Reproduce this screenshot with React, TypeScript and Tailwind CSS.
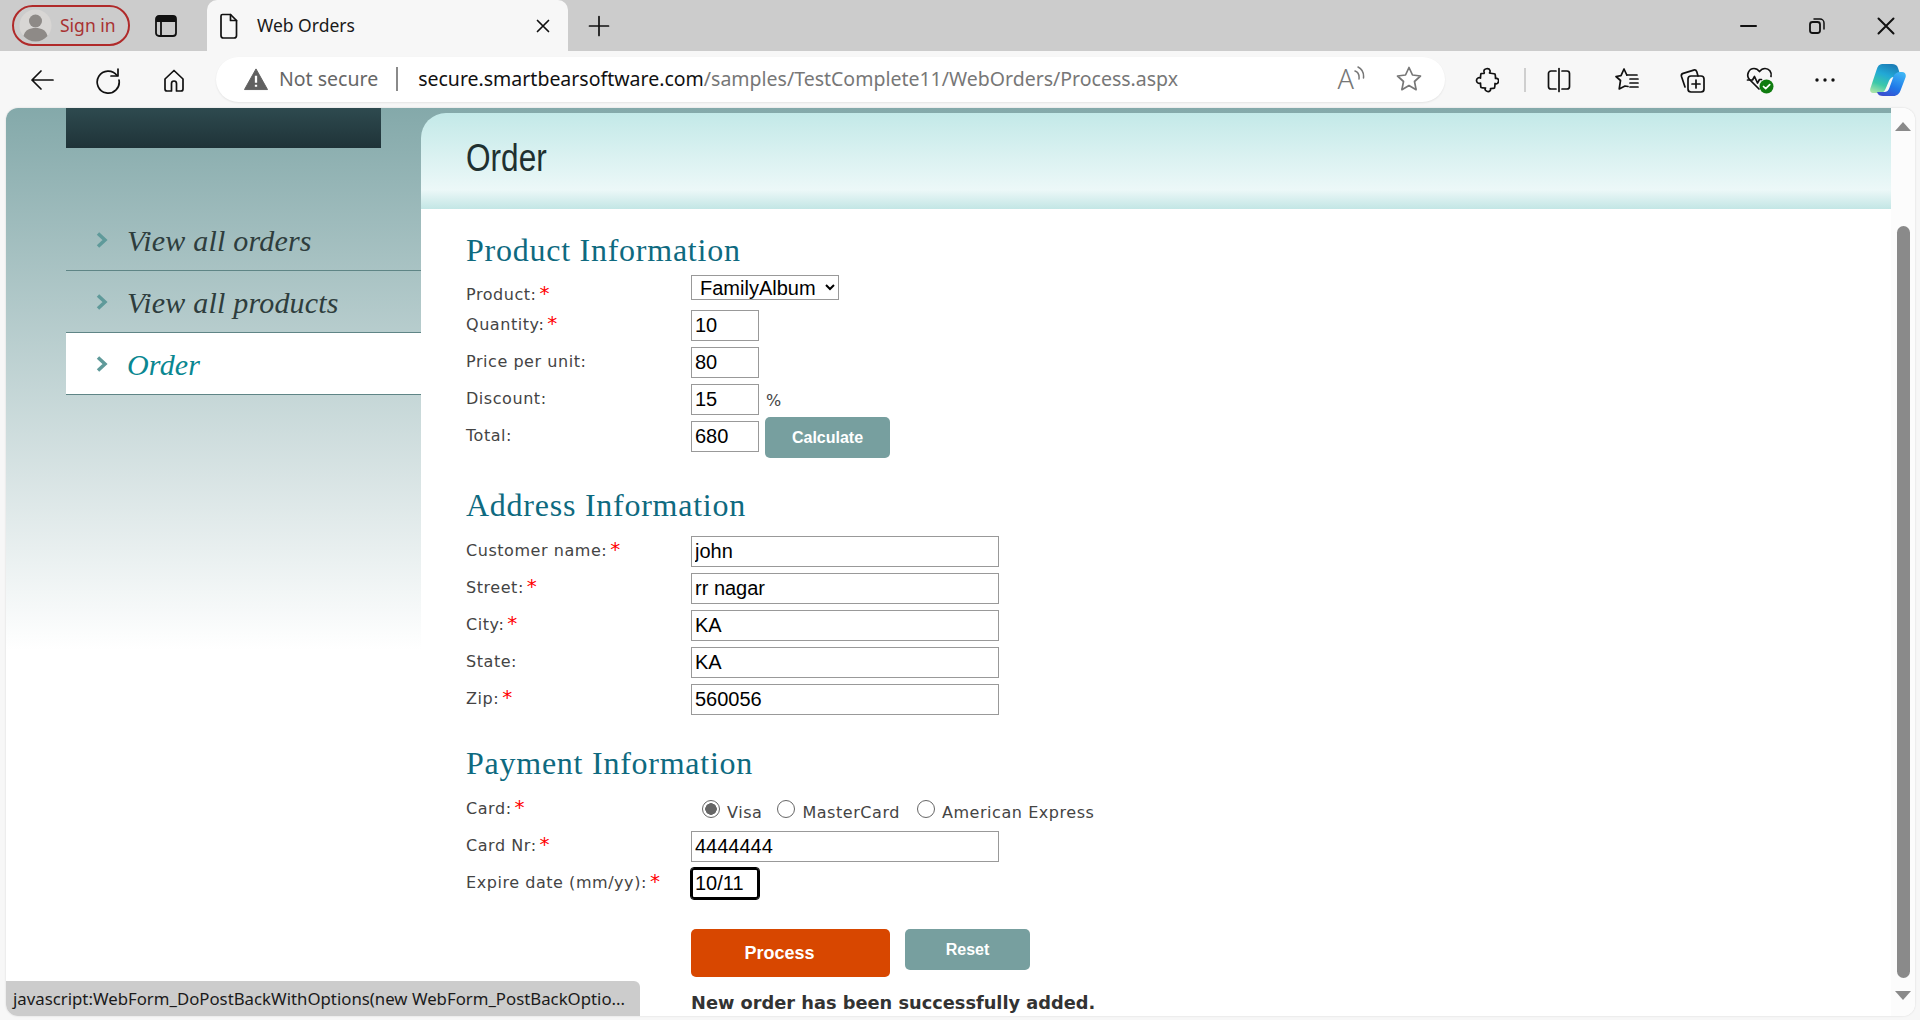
import React from "react";

const sans = "font-['Noto_Sans','Liberation_Sans',sans-serif]";
const stroke = { fill: "none", stroke: "currentColor", strokeWidth: 1.7, strokeLinecap: "round" as const, strokeLinejoin: "round" as const };

function Ico({ children, w = 28, h = 28, vb = "0 0 28 28", cls = "text-[#111]" }: { children: React.ReactNode; w?: number; h?: number; vb?: string; cls?: string }) {
  return <svg width={w} height={h} viewBox={vb} className={cls} {...stroke}>{children}</svg>;
}

function Slot({ w, children }: { w: string; children: React.ReactNode }) {
  return <div className={`${w} shrink-0 flex items-center justify-center`}>{children}</div>;
}

function TitleBar() {
  return (
    <div className="h-[51px] shrink-0 bg-[#cccccc] flex items-center">
      <div className="ml-[12px] mt-[-1px] w-[118px] h-[41px] shrink-0 rounded-full border-2 border-[#b02a2a] flex items-center pl-[5px]">
        <svg width="33" height="33" viewBox="0 0 33 33" className="shrink-0">
          <circle cx="16.5" cy="16.5" r="16" fill="#d8d6d4" />
          <circle cx="16.5" cy="12" r="6.5" fill="#8e8a87" />
          <path d="M4.5 27c1.5-6 6-8 12-8s10.500 2 12 8c-3 3.500-7 5.500-12 5.500s-9-2-12-5.500z" fill="#8e8a87" />
        </svg>
        <span className={`${sans} ml-[8px] text-[17.500px] text-[#a83232]`}>Sign in</span>
      </div>
      <div className="ml-[24px] shrink-0 w-[24px] h-[24px] flex items-center justify-center">
        <svg width="22" height="22" viewBox="0 0 22 22">
          <rect x="1" y="1" width="20" height="20" rx="3" fill="none" stroke="#111" strokeWidth="1.8" />
          <path d="M1 4a3 3 0 0 1 3-3h14a3 3 0 0 1 3 3v3H1z" fill="#111" />
          <path d="M6 7v14" stroke="#111" strokeWidth="1.8" />
        </svg>
      </div>
      <div className="ml-[29px] w-[361px] h-[51px] mt-0 shrink-0 bg-[#f7f7f7] rounded-t-[10px] flex items-center">
        <div className="ml-[12px] w-[20px] flex justify-center">
          <Ico w={20} h={26} vb="0 0 20 26"><path d="M3.500 1.500h8l6 6v15a2.500 2.500 0 0 1-2.500 2.500H4.500a2.500 2.500 0 0 1-2.500-2.500V3a1.500 1.500 0 0 1 1.500-1.500z" /><path d="M11.500 1.500v6h6" /></Ico>
        </div>
        <span className={`${sans} ml-[18px] text-[17.500px] text-[#1a1a1a]`}>Web Orders</span>
        <div className="ml-auto mr-[13px]">
          <Ico w={24} h={24} vb="0 0 24 24"><path d="M6.500 6.500l11 11M17.500 6.500l-11 11" /></Ico>
        </div>
      </div>
      <div className="ml-[19px]">
        <Ico w={24} h={24} vb="0 0 24 24"><path d="M12 2.500v19M2.500 12h19" /></Ico>
      </div>
      <div className="ml-auto flex">
        <Slot w="w-[69px]"><Ico w={20} h={20} vb="0 0 20 20"><path d="M3 10h15" strokeWidth="2" /></Ico></Slot>
        <Slot w="w-[69px]"><Ico w={20} h={20} vb="0 0 20 20"><rect x="3" y="6" width="10" height="11" rx="2.500" strokeWidth="1.800" /><path d="M7 3h6a4 4 0 0 1 4 4v6" strokeWidth="1.500" /></Ico></Slot>
        <Slot w="w-[69px]"><Ico w={22} h={22} vb="0 0 22 22"><path d="M3.500 3.500l15 15M18.500 3.500l-15 15" strokeWidth="2" /></Ico></Slot>
      </div>
    </div>
  );
}

function Toolbar() {
  return (
    <div className="h-[57px] shrink-0 bg-[#f7f7f7] flex items-center">
      <div className="ml-[9px] flex">
        <Slot w="w-[66px]"><Ico><path d="M25 14H4M13 5l-9 9 9 9" /></Ico></Slot>
        <Slot w="w-[66px]"><Ico><path d="M23 9.500A11 11 0 1 0 25 14" /><path d="M24 3v7h-7" /></Ico></Slot>
        <Slot w="w-[66px]"><Ico><path d="M5 13l9-8.500L23 13v10a2 2 0 0 1-2 2h-4.500v-7.500a2.500 2.500 0 0 0-5 0V25H7a2 2 0 0 1-2-2z" /></Ico></Slot>
      </div>
      <div className="ml-[9px] w-[1229px] h-[45px] mt-[-1px] shrink-0 rounded-full bg-white shadow-[0_1px_2px_rgba(0,0,0,0.08)] flex items-center">
        <div className="ml-[28px] w-[24px] flex justify-center">
          <svg width="25" height="24" viewBox="0 0 25 24">
            <path d="M12.500 1.500L24.500 23H.5z" fill="#606060" stroke="#606060" strokeLinejoin="round" />
            <path d="M12.500 8.500v7.500M12.500 18v2" stroke="#fff" strokeWidth="2.400" />
          </svg>
        </div>
        <span className={`${sans} ml-[11px] text-[19.500px] text-[#666]`}>Not secure</span>
        <div className="ml-[18px] w-[2px] h-[24px] bg-[#8a8a8a]" />
        <span className={`${sans} ml-[20px] text-[19.500px] text-[#777] whitespace-nowrap`}>
          <span className="text-[#111]">secure.smartbearsoftware.com</span>/samples/TestComplete11/WebOrders/Process.aspx
        </span>
        <div className="ml-auto flex items-center">
          <span className={`${sans} font-light text-[27px] leading-[32px] text-[#777]`}>A</span>
          <svg width="12" height="16" viewBox="0 0 12 16" className="text-[#777] mb-[12px] ml-[-1px]">
            <path d="M2 6c3 1 4.500 3.500 4 8M5 2c4 2 6 6 5.500 11" fill="none" stroke="currentColor" strokeWidth="1.500" strokeLinecap="round" />
          </svg>
          <div className="ml-[30px] mr-[22px]">
            <Ico cls="text-[#777]"><path d="M14 2.500l3.500 7.500 8 1-6 5.500 1.600 8.200L14 20.500l-7.100 4.200 1.600-8.200-6-5.500 8-1z" /></Ico>
          </div>
        </div>
      </div>
      <div className="ml-[9px] flex items-center">
        <Slot w="w-[66px]">
          <Ico w={24} h={26} vb="0 0 24 26">
            <path d="M9 4.500C8.500 1.500 14 .5 15 3.500c.3 1-.2 2-.5 2.500 1.500.5 4 .5 5.500 1 .5 1.500.5 3 .5 4.500 2.500-.5 3.500 1 3 3s-2 3-3.500 2c0 1.500 0 3-.5 4.500-1 .5-2.500 .5-4 .5.500 2-1 3.500-3 3s-3-2-2-3.500c-1.500 0-3 0-4.500-.5-.5-1.500-.5-3-.5-4.500-2 1-4-.5-4-2.500s2-3.500 4-2.500c0-1.500 0-3 .5-4.500C6 6.500 7.500 6.500 9 6.500c.5-.5.200-1.200 0-2z" />
          </Ico>
        </Slot>
        <div className="ml-[4px] w-[2px] h-[24px] bg-[#cfcfcf] shrink-0" />
        <Slot w="w-[66px]"><Ico><path d="M11 5H6a2.500 2.500 0 0 0-2.500 2.500v13A2.500 2.500 0 0 0 6 23h5M17 5h5a2.500 2.500 0 0 1 2.500 2.500v13A2.500 2.500 0 0 1 22 23h-5" /><path d="M14 2.500v23" /></Ico></Slot>
        <Slot w="w-[67px]"><Ico><path d="M14.800 9l-2.800-6-3 6.700-5 .8 4.500 4-1.300 8.500 5.800-3 3 .5" /><path d="M18 13h8M18 17h8M18 21h8M15 9h10" /></Ico></Slot>
        <Slot w="w-[66px]"><Ico><rect x="10" y="10" width="16" height="16" rx="3" /><path d="M18 14v8M14 18h8" /><path d="M7 21l-3.500-10.500a2.500 2.500 0 0 1 1.700-3.100l10.500-3.300a2.500 2.500 0 0 1 3 1.500L20 10" /></Ico></Slot>
        <Slot w="w-[69px]">
          <svg width="30" height="30" viewBox="0 0 30 30" className="text-[#111]">
            <path d="M14 24L4.500 14.500C.5 10 4 3.500 9 3.500c2.500 0 4 1 5.500 3 1.500-2 3-3 5.500-3 4 0 7 3.500 6 8" {...stroke} />
            <path d="M2.500 15h5l2-3.500 3 6.500 2-3.500h2" {...stroke} />
            <circle cx="21.500" cy="21.500" r="7" fill="#107c10" />
            <path d="M18.500 21.500l2.200 2.200 4-4" fill="none" stroke="#fff" strokeWidth="1.700" strokeLinecap="round" strokeLinejoin="round" />
          </svg>
        </Slot>
        <Slot w="w-[61px]">
          <svg width="22" height="6" viewBox="0 0 22 6" className="text-[#111]"><circle cx="3" cy="3" r="1.700" fill="currentColor" /><circle cx="11" cy="3" r="1.700" fill="currentColor" /><circle cx="19" cy="3" r="1.700" fill="currentColor" /></svg>
        </Slot>
        <Slot w="w-[66px]">
          <svg width="36" height="32" viewBox="0 0 36 32">
            <defs>
              <linearGradient id="cpa" x1="0.6" y1="0" x2="0.2" y2="1"><stop offset="0" stopColor="#1c7fb8" /><stop offset="0.35" stopColor="#22a9d6" /><stop offset="0.7" stopColor="#3cc8a8" /><stop offset="1" stopColor="#a6e3a8" /></linearGradient>
              <linearGradient id="cpb" x1="0.8" y1="0" x2="0.3" y2="1"><stop offset="0" stopColor="#3fb6f5" /><stop offset="0.6" stopColor="#1f78e8" /><stop offset="1" stopColor="#3a4fd0" /></linearGradient>
            </defs>
            <path d="M12 0h10c3 0 5 1 6 4l3 9h-7c-3 0-4.500 2-5.500 5l-3 7c-1 2.500-3 4-6 4H3c-2.500 0-3.500-2-2.500-5l6-18C7.500 2 9.500 0 12 0z" fill="url(#cpa)" />
            <path d="M31 8h1c3 0 4.500 2.500 3.500 5.500l-5 13c-1 3-3.500 5.500-7 5.500H13c-3 0-5-1-6-4h7c3 0 4.500-1.500 5.500-4.500l4-11c1-3 3.500-4.500 6.500-4.500z" fill="url(#cpb)" />
          </svg>
        </Slot>
      </div>
    </div>
  );
}

function Chevron() {
  return (
    <svg width="12" height="16" viewBox="0 0 12 16" className="shrink-0">
      <path d="M2 1.500l7 6.500-7 6.500" fill="none" stroke="#5f9a9a" strokeWidth="3.500" />
    </svg>
  );
}

function NavRow({ label, active }: { label: string; active?: boolean }) {
  return (
    <div className={`h-[62px] flex items-center pl-[30px] border-b border-b-[#5f8586] ${active ? "bg-white" : ""}`}>
      <Chevron />
      <span className={`ml-[19px] mt-[1px] font-['Liberation_Serif',serif] italic text-[30px] tracking-[0.2px] ${active ? "text-[#0a8791]" : "text-[#2e3d3d]"}`}>{label}</span>
    </div>
  );
}

function Label({ text, req }: { text: string; req?: boolean }) {
  return (
    <span className="w-[225px] shrink-0 h-[31px] leading-[29px] font-['DejaVu_Sans',sans-serif] text-[16px] tracking-[0.55px] text-[#444] whitespace-nowrap">
      {text}{req && <span className="text-[#ff0000] text-[20px] leading-[0] ml-[3px]">*</span>}
    </span>
  );
}

const inputCls = "h-[31px] border border-[#999] px-[3px] font-['Liberation_Sans',sans-serif] text-[20px] text-black bg-white";

function Field({ label, req, value, wide }: { label: string; req?: boolean; value: string; wide?: boolean }) {
  return (
    <div className="h-[37px] flex items-start">
      <Label text={label} req={req} />
      <input readOnly defaultValue={value} className={`${inputCls} ${wide ? "w-[308px]" : "w-[68px]"}`} />
    </div>
  );
}

function Heading({ children, cls }: { children: React.ReactNode; cls: string }) {
  return <h2 className={`${cls} h-[40px] leading-[40px] font-['Liberation_Serif',serif] text-[32px] tracking-[0.75px] text-[#0e6a80]`}>{children}</h2>;
}

function Radio({ label, checked, cls }: { label: string; checked?: boolean; cls: string }) {
  return (
    <label className={`${cls} flex items-center font-['DejaVu_Sans',sans-serif] text-[16px] tracking-[0.55px] text-[#444] whitespace-nowrap`}>
      <input
        type="radio"
        readOnly
        checked={!!checked}
        className="appearance-none w-[18px] h-[18px] mt-[-6px] rounded-full border border-[#666] bg-white checked:bg-[radial-gradient(circle,#666_0,#666_5.500px,#fff_6px)]"
      />
      <span className="ml-[7px] mt-[2px]">{label}</span>
    </label>
  );
}

function Main() {
  return (
    <div className="flex-1 min-w-0 flex flex-col">
      <div className="mt-[5px] h-[96px] shrink-0 rounded-tl-[25px] bg-[linear-gradient(#c3e9e8_0%,#ecf8f8_80%,#c3e6e5_100%)] flex items-center pl-[45px]">
        <h1 className="mt-[-5px] origin-left scale-x-[0.81] font-['Liberation_Sans',sans-serif] text-[39px] text-[#1f3030]">Order</h1>
      </div>
      <div className="flex-1 bg-white pl-[45px] pt-[21px]">
        <Heading cls="">Product Information</Heading>
        <div className="mt-[5px] h-[35px] flex items-start">
          <div className="w-[225px] shrink-0 pt-[5px] flex"><Label text="Product:" req /></div>
          <select className="h-[25px] w-[148px] border border-[#999] bg-white pl-[4px] font-['Liberation_Sans',sans-serif] text-[20px] leading-[23px] text-black" defaultValue="FamilyAlbum">
            <option>FamilyAlbum</option>
          </select>
        </div>
        <Field label="Quantity:" req value="10" />
        <Field label="Price per unit:" value="80" />
        <div className="h-[37px] flex items-start">
          <Label text="Discount:" />
          <input readOnly defaultValue="15" className={`${inputCls} w-[68px]`} />
          <span className="ml-[7px] leading-[33px] font-['DejaVu_Sans',sans-serif] text-[16px] text-[#444]">%</span>
        </div>
        <div className="h-[37px] flex items-start">
          <Label text="Total:" />
          <input readOnly defaultValue="680" className={`${inputCls} w-[68px]`} />
          <button className="ml-[6px] mt-[-4px] w-[125px] h-[41px] rounded-[5px] bg-[#779f9f] text-white font-['Liberation_Sans',sans-serif] font-bold text-[16px]">Calculate</button>
        </div>

        <Heading cls="mt-[27px]">Address Information</Heading>
        <div className="mt-[11px]">
          <Field label="Customer name:" req value="john" wide />
          <Field label="Street:" req value="rr nagar" wide />
          <Field label="City:" req value="KA" wide />
          <Field label="State:" value="KA" wide />
          <Field label="Zip:" req value="560056" wide />
        </div>

        <Heading cls="mt-[22px]">Payment Information</Heading>
        <div className="mt-[11px] h-[37px] flex items-start">
          <Label text="Card:" req />
          <div className="flex items-center h-[37px] mt-[-1px]">
            <Radio label="Visa" checked cls="ml-[11px]" />
            <Radio label="MasterCard" cls="ml-[15px]" />
            <Radio label="American Express" cls="ml-[17px]" />
          </div>
        </div>
        <Field label="Card Nr:" req value="4444444" wide />
        <div className="h-[37px] flex items-start">
          <Label text="Expire date (mm/yy):" req />
          <input readOnly defaultValue="10/11" className="h-[31px] w-[68px] rounded-[3px] border-[2px] border-black outline outline-1 outline-black px-[2px] font-['Liberation_Sans',sans-serif] text-[20px] text-black bg-white" />
        </div>
        <div className="mt-[24px] ml-[225px] flex items-start">
          <button className="w-[199px] h-[48px] rounded-[5px] bg-[#d84700] text-white font-['Liberation_Sans',sans-serif] font-bold text-[18px] pr-[22px]">Process</button>
          <button className="ml-[15px] w-[125px] h-[41px] rounded-[5px] bg-[#779f9f] text-white font-['Liberation_Sans',sans-serif] font-bold text-[16px]">Reset</button>
        </div>
        <p className="mt-[16px] ml-[225px] leading-[20px] font-['DejaVu_Sans',sans-serif] font-bold text-[17.800px] text-[#333] whitespace-nowrap">New order has been successfully added.</p>
      </div>
    </div>
  );
}

function Scrollbar() {
  return (
    <div className="w-[24px] shrink-0 bg-[#fcfcfc] rounded-r-[12px] flex flex-col items-center pt-[14px] pb-[16px]">
      <svg width="16" height="9" viewBox="0 0 16 9" className="shrink-0"><path d="M8 0l8 9H0z" fill="#8a8a8a" /></svg>
      <div className="mt-[95px] w-[13px] flex-1 rounded-full bg-[#8a8a8a]" />
      <svg width="16" height="9" viewBox="0 0 16 9" className="mt-[13px] shrink-0"><path d="M0 0h16l-8 9z" fill="#8a8a8a" /></svg>
    </div>
  );
}

export default function App() {
  return (
    <div className="w-[1920px] h-[1020px] overflow-hidden flex flex-col bg-[#f7f7f7]">
      <TitleBar />
      <Toolbar />
      <div className="flex-1 min-h-0 relative flex ml-[6px] mr-[5px] mb-[4px] rounded-[12px] overflow-hidden bg-white shadow-[0_0_2px_rgba(0,0,0,0.15)]">
        <div className="flex-1 min-w-0 flex bg-[linear-gradient(#84a9aa_0,#ffffff_542px)]">
          <aside className="w-[415px] shrink-0 pl-[60px]">
            <div className="w-[315px] h-[40px] bg-[linear-gradient(#2e4a4f,#1f3338)]" />
            <nav className="mt-[61px]">
              <NavRow label="View all orders" />
              <NavRow label="View all products" />
              <NavRow label="Order" active />
            </nav>
          </aside>
          <Main />
        </div>
        <Scrollbar />
        <div className={`absolute left-0 bottom-0 w-[634px] h-[35px] bg-[#cccccc] rounded-tr-[6px] flex items-center pl-[7px] ${sans} text-[16.800px] text-[#1a1a1a] whitespace-nowrap`}>
          javascript:WebForm_DoPostBackWithOptions(new WebForm_PostBackOptio...
        </div>
      </div>
    </div>
  );
}
